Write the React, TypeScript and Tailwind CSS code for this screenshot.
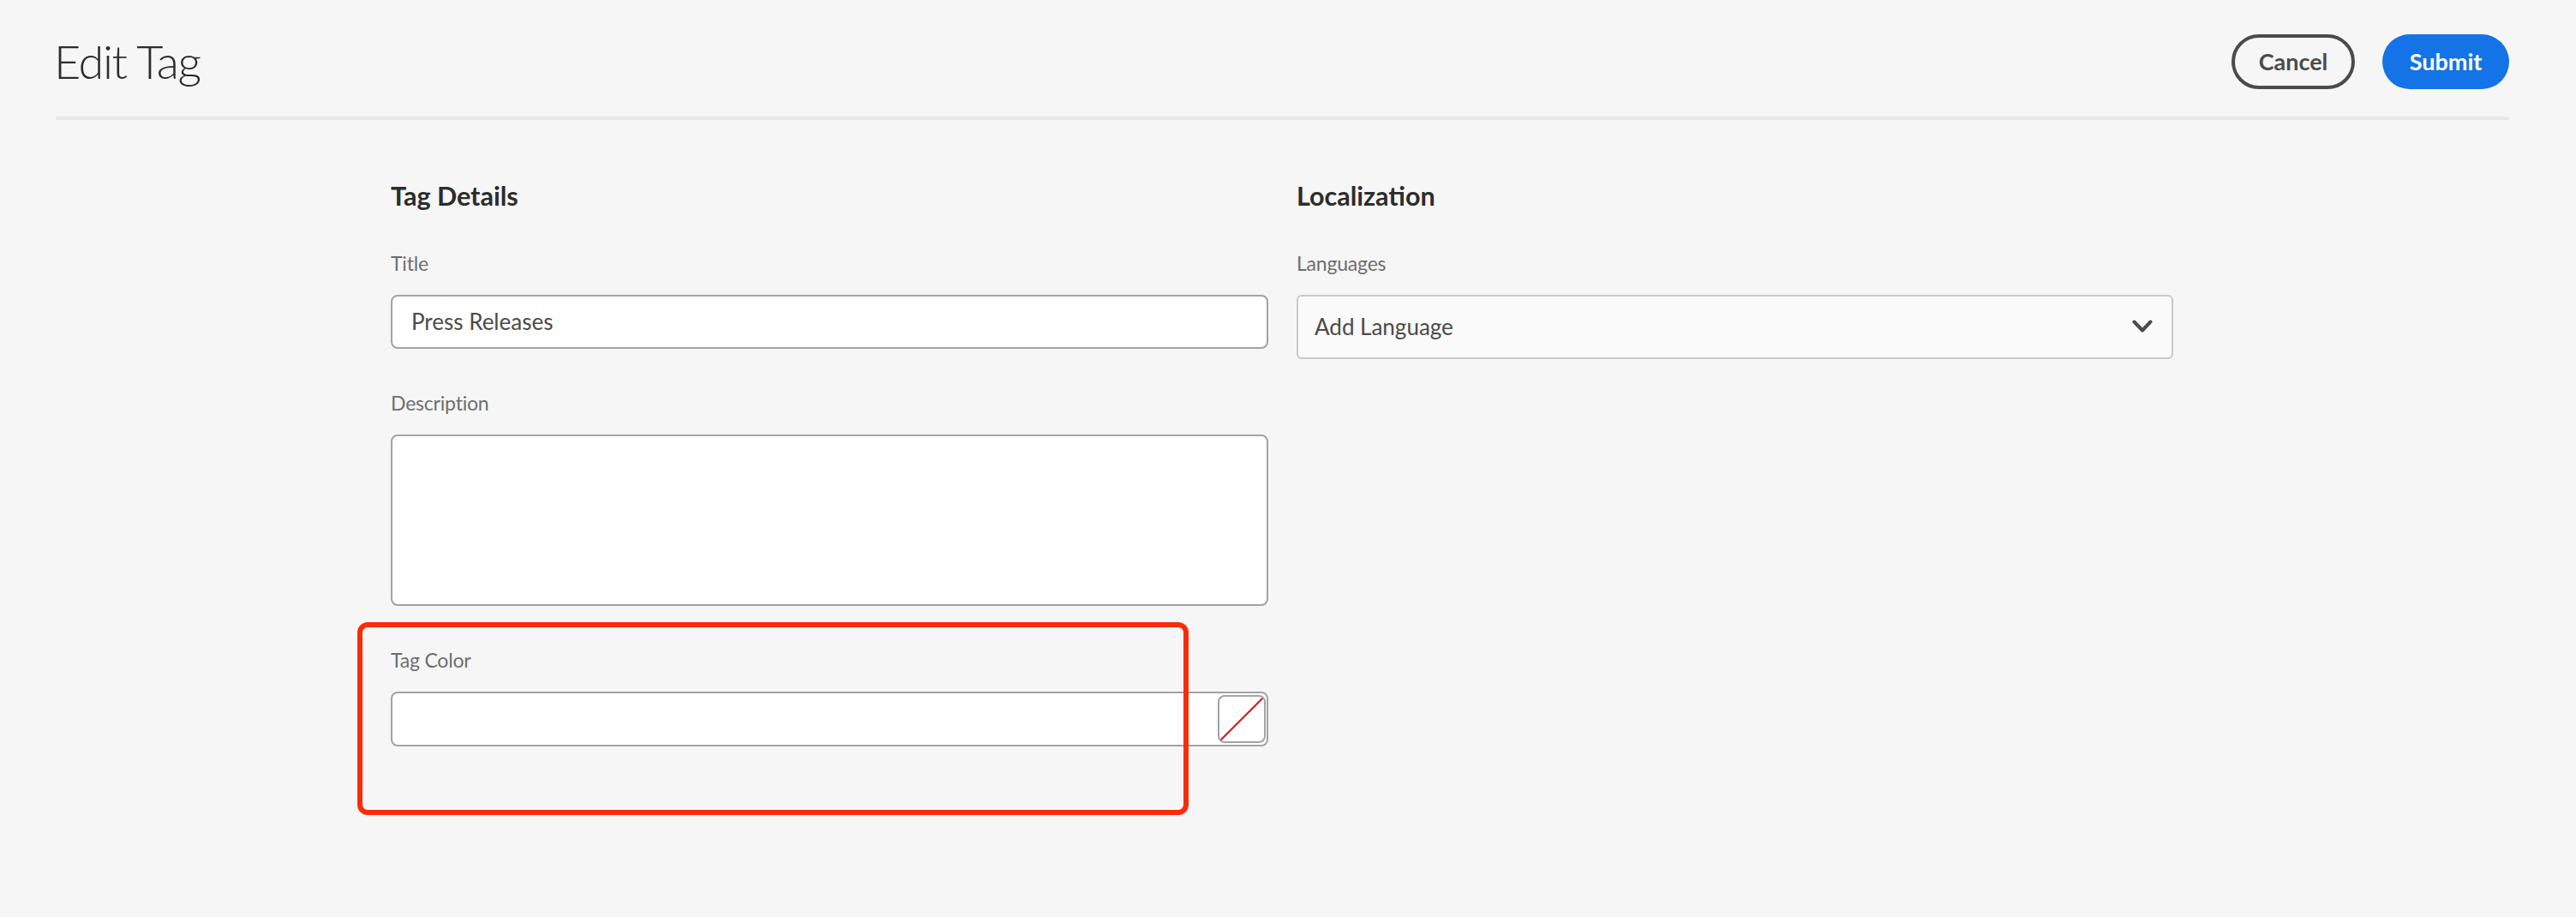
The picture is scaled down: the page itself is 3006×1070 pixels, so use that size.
import React from 'react';

const font = "font-['Lato','Noto_Sans',sans-serif]";

function Label({ children }: { children: React.ReactNode }) {
  return <div className="h-[36px] text-[23px] leading-[36px] tracking-[-0.2px] text-[#6e6e6e] mb-[19px]">{children}</div>;
}

function NoColorSwatch() {
  return (
    <div className="w-[56px] h-[56px] border-[2px] border-[#a3a3a3] rounded-[8px] bg-white overflow-hidden">
      <svg viewBox="0 0 52 52" className="w-full h-full">
        <line x1="0" y1="52" x2="52" y2="0" stroke="#d7141a" strokeWidth="2" />
      </svg>
    </div>
  );
}

export default function App() {
  return (
    <div className={`${font} relative w-[3006px] h-[1070px] bg-[#f6f6f6] overflow-hidden`}>
      {/* Header */}
      <div className="ml-[65px] mr-[78px] h-[140px] pt-[40px] pb-[32px] border-b-[4px] border-[#e9e9e9] flex items-center justify-between">
        <h1 className="-ml-[2px] text-[54px] font-light leading-none tracking-[-1.4px] text-[#2c2c2c]">Edit Tag</h1>
        <div className="flex items-center gap-[32px]">
          <button className="w-[144px] h-[64px] rounded-full border-[4px] border-[#4b4b4b] text-[27px] font-bold text-[#4b4b4b]">
            Cancel
          </button>
          <button className="w-[148px] h-[64px] rounded-full bg-[#1473e6] text-[27px] font-bold text-white">
            Submit
          </button>
        </div>
      </div>

      {/* Form */}
      <div className="ml-[456px] mt-[68px] grid grid-cols-[1024px_1023px] gap-x-[33px]">
        <div>
          <h2 className="h-[40px] text-[30.5px] leading-[40px] font-bold text-[#2c2c2c] mb-[41px]">Tag Details</h2>
          <Label>Title</Label>
          <div className="h-[63px] border-[2px] border-[#a3a3a3] rounded-[8px] bg-white flex items-center px-[22px] text-[26px] text-[#4b4b4b] mb-[45px]">
            Press Releases
          </div>
          <Label>Description</Label>
          <div className="h-[200px] border-[2px] border-[#a3a3a3] rounded-[8px] bg-white mb-[45px]" />
          <Label>Tag Color</Label>
          <div className="h-[64px] border-[2px] border-[#a3a3a3] rounded-[8px] bg-white flex items-center justify-end pr-[1px]">
            <NoColorSwatch />
          </div>
        </div>
        <div>
          <h2 className="h-[40px] text-[30.5px] leading-[40px] font-bold text-[#2c2c2c] mb-[41px]">Localization</h2>
          <Label>Languages</Label>
          <div className="h-[75px] border-[2px] border-[#cacaca] rounded-[6px] bg-[#fafafa] flex items-center justify-between pl-[19px] pr-[22px] text-[26px] text-[#4b4b4b]">
            <span>Add Language</span>
            <svg width="24" height="16" viewBox="0 0 24 16" fill="none" className="mb-[2px]">
              <path d="M2.5 2.5 L12 12.5 L21.5 2.5" stroke="#4b4b4b" strokeWidth="4" strokeLinecap="round" strokeLinejoin="round" />
            </svg>
          </div>
        </div>
      </div>

      {/* Red annotation box */}
      <div className="absolute left-[417px] top-[726px] w-[970px] h-[225px] border-[6px] border-[#f92c0a] rounded-[12px]" />
    </div>
  );
}
